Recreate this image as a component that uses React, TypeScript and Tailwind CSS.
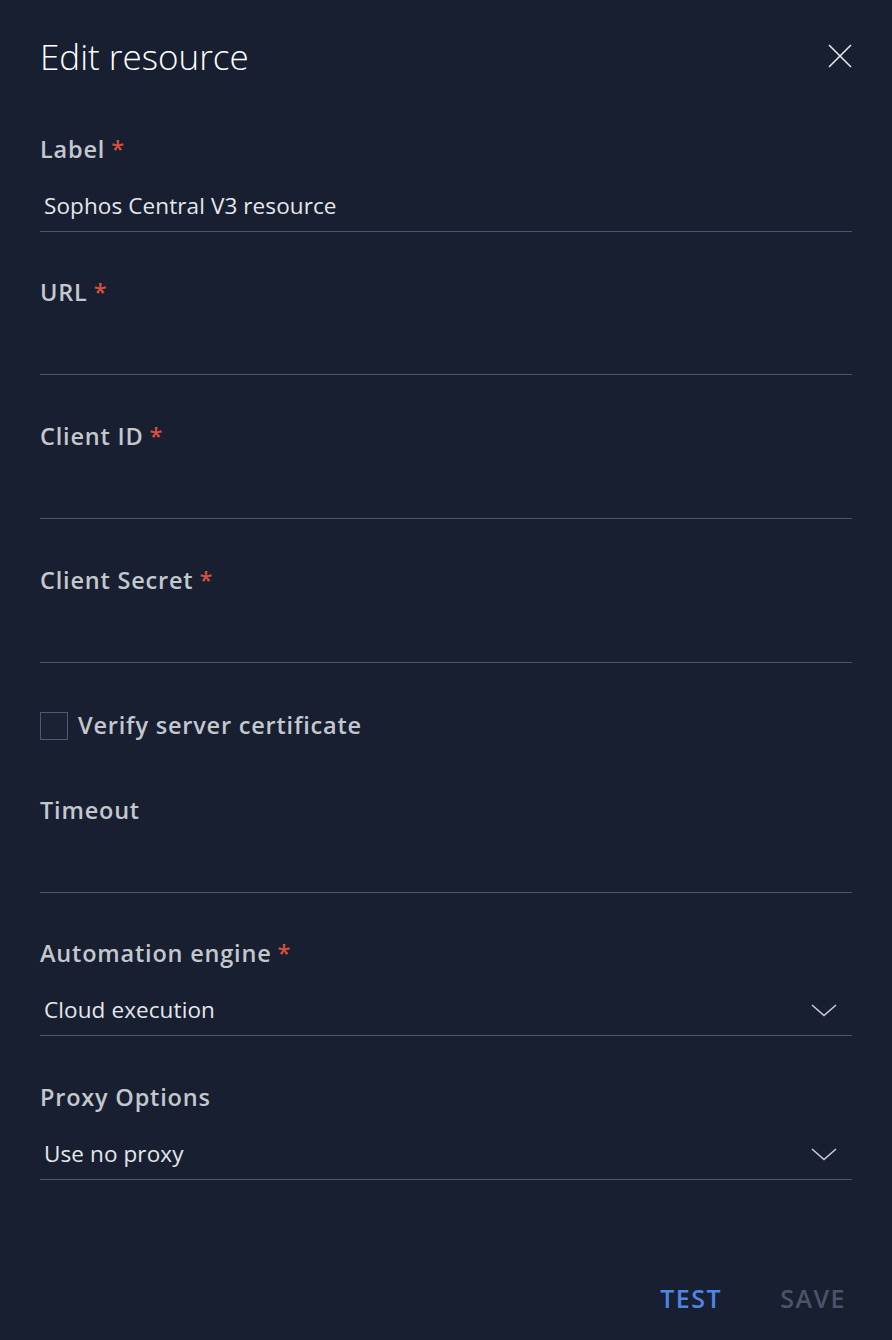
import React from 'react';

type FieldProps = {
  label: string;
  required?: boolean;
  value?: string;
  select?: boolean;
  className?: string;
};

const Chevron = () => (
  <svg width="26" height="14" viewBox="0 0 26 14" fill="none" className="shrink-0">
    <polyline points="1,2 13,12.5 25,2" stroke="#c9cdd4" strokeWidth="1.6" />
  </svg>
);

const Field = ({ label, required, value, select, className }: FieldProps) => (
  <div className={`flex flex-col ${className ?? ''}`}>
    <div className="h-[30px] flex items-center text-[23.5px] font-semibold text-[#c3c7ce] tracking-[0.8px]">
      {label}
      {required && <span className="ml-[6px] text-[#d9503f]">*</span>}
    </div>
    <div className="mt-4 h-[51px] flex items-center justify-between border-b border-[#4a566c] pl-1 pr-[15px]">
      <span className="text-[22.5px] text-[#e4e7eb] tracking-[0.1px]">{value}</span>
      {select && <Chevron />}
    </div>
  </div>
);

export default function App() {
  return (
    <div
      className="w-full h-[1340px] bg-[#181f31] px-10 flex flex-col"
      style={{ fontFamily: '"Open Sans", Lato, sans-serif' }}
    >
      <div className="flex items-center justify-between pt-[28px] h-[94px]">
        <h1 className="text-[35px] font-light text-white leading-none -mt-[10px]">Edit resource</h1>
        <svg width="24" height="24" viewBox="0 0 24 24" fill="none" className="-mt-[10px]">
          <path d="M1 1 L23 23 M23 1 L1 23" stroke="#e6e8ec" strokeWidth="1.6" />
        </svg>
      </div>

      <div className="mt-[41px] flex flex-col">
        <Field label="Label" required value="Sophos Central V3 resource" />
        <Field label="URL" required className="mt-[46px]" />
        <Field label="Client ID" required className="mt-[47px]" />
        <Field label="Client Secret" required className="mt-[47px]" />
      </div>

      <label className="mt-[49px] flex items-center gap-[10px] h-[28px]">
        <span className="w-[28px] h-[28px] border border-[#4b5a78] bg-[#1a2234]" />
        <span className="text-[23.5px] font-semibold text-[#c3c7ce] tracking-[0.8px]">Verify server certificate</span>
      </label>

      <div className="mt-[56px] flex flex-col">
        <Field label="Timeout" />
        <Field label="Automation engine" required value="Cloud execution" select className="mt-[46px]" />
        <Field label="Proxy Options" value="Use no proxy" select className="mt-[47px]" />
      </div>

      <div className="mt-auto mb-[23px] flex justify-end items-center gap-[58px] pr-[6px]">
        <button className="text-[25px] font-semibold text-[#4f86e6] tracking-[1.5px]">TEST</button>
        <button className="text-[25px] font-semibold text-[#4a5568] tracking-[1.5px]">SAVE</button>
      </div>
    </div>
  );
}
